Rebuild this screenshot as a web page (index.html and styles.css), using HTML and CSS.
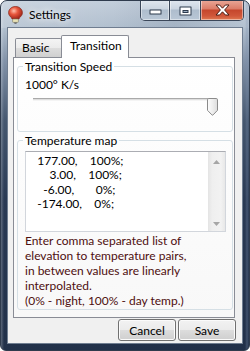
FILE: index.html
```html
<!DOCTYPE html>
<html>
<head>
<meta charset="utf-8">
<title>Settings</title>
<link rel="stylesheet" href="styles.css">
</head>
<body>
<div class="window">
  <div class="titlebar">
    <svg class="app-icon" width="15" height="18" viewBox="0 0 15 18">
      <defs>
        <radialGradient id="bulb" cx="0.38" cy="0.35" r="0.65">
          <stop offset="0" stop-color="#ffc2ad"/>
          <stop offset="0.45" stop-color="#e8573d"/>
          <stop offset="1" stop-color="#a3271a"/>
        </radialGradient>
      </defs>
      <path d="M7.5 0.5C3.6 0.5 0.6 3.3 0.6 6.6c0 2.4 1.4 3.9 2.9 5.1l0.6 1.3h6.8l0.6-1.3c1.5-1.2 2.9-2.7 2.9-5.1C14.4 3.3 11.4 0.5 7.5 0.5z" fill="url(#bulb)" stroke="#8e2c1f" stroke-width="0.8"/>
      <rect x="4.6" y="13" width="5.8" height="3.4" rx="0.8" fill="#e9e2b6" stroke="#7b7560" stroke-width="0.6"/>
      <path d="M6 16.4h3l-0.6 1.3h-1.8z" fill="#5a5a5a"/>
    </svg>
    <span class="title">Settings</span>
    <div class="caption">
      <div class="cap cap-min">
        <svg width="13" height="6" viewBox="0 0 13 6"><rect x="0.5" y="0.5" width="12" height="5" rx="0.5" fill="#2c3a4d"/><rect x="1.5" y="1.5" width="10" height="3" fill="#fff"/></svg>
      </div>
      <div class="cap cap-max">
        <svg width="13" height="10" viewBox="0 0 13 10"><rect x="0.5" y="0.5" width="12" height="9" rx="0.5" fill="#2c3a4d"/><rect x="1.5" y="1.5" width="10" height="7" fill="#fff"/><rect x="3.5" y="4" width="6" height="3" fill="#2c3a4d"/><rect x="4.5" y="5" width="4" height="1" fill="#9fb0c3"/></svg>
      </div>
      <div class="cap cap-close">
        <svg width="15" height="12" viewBox="0 0 15 12"><path d="M1 1h3.6L7.5 4.2 10.4 1H14L9.6 6 14 11h-3.6L7.5 7.8 4.6 11H1l4.4-5z" fill="#fff" stroke="#4b1d14" stroke-width="1" stroke-linejoin="round"/></svg>
      </div>
    </div>
  </div>

  <div class="client">
    <div class="tabs">
      <div class="tab tab-basic">Basic</div>
      <div class="tab tab-active">Transition</div>
    </div>

    <div class="panel">
      <fieldset class="group group-speed">
        <legend>Transition Speed</legend>
        <div class="speed-value">1000° K/s</div>
        <div class="slider">
          <div class="track"></div>
          <svg class="thumb" width="11" height="18" viewBox="0 0 11 18">
            <defs>
              <linearGradient id="thumbfill" x1="0" y1="0" x2="1" y2="0">
                <stop offset="0" stop-color="#fdfdfd"/>
                <stop offset="0.5" stop-color="#eeeeee"/>
                <stop offset="1" stop-color="#dcdcdc"/>
              </linearGradient>
            </defs>
            <path d="M1.8 0.5h7.4a1.3 1.3 0 0 1 1.3 1.3V12.3L6.1 16.9a0.9 0.9 0 0 1-1.2 0L0.5 12.3V1.8a1.3 1.3 0 0 1 1.3-1.3z" fill="url(#thumbfill)" stroke="#8b8b8b" stroke-width="1"/>
          </svg>
        </div>
      </fieldset>

      <fieldset class="group group-map">
        <legend>Temperature map</legend>
        <div class="textbox">
          <pre class="map-text">   177.00,    100%;
       3.00,    100%;
     -6.00,       0%;
   -174.00,    0%;</pre>
          <div class="vscroll">
            <svg width="7" height="4" viewBox="0 0 7 4"><path d="M3.5 0L7 4H0z" fill="#a6a6a6"/></svg>
            <svg width="7" height="4" viewBox="0 0 7 4"><path d="M0 0h7L3.5 4z" fill="#a6a6a6"/></svg>
          </div>
        </div>
        <p class="hint">Enter comma separated list of<br>elevation to temperature pairs,<br>in between values are linearly<br>interpolated.<br>(0% - night, 100% - day temp.)</p>
      </fieldset>
    </div>

    <div class="buttons">
      <button class="btn">Cancel</button>
      <button class="btn">Save</button>
    </div>
  </div>
</div>
</body>
</html>
```

FILE: styles.css
```css
* {
  box-sizing: border-box;
}

html,
body {
  margin: 0;
  padding: 0;
}

body {
  width: 250px;
  height: 351px;
  overflow: hidden;
  background: #ffffff;
  font-family: Lato, "Open Sans", sans-serif;
  font-size: 12px;
  line-height: 15px;
  color: #000000;
}

/* ---------- window frame ---------- */
.window {
  width: 250px;
  height: 351px;
  display: flex;
  flex-direction: column;
  border: 1px solid #2f3b4d;
  border-radius: 7px 7px 6px 6px;
  overflow: hidden;
  background:
    linear-gradient(90deg, rgba(255, 255, 255, 0.25) 0, rgba(255, 255, 255, 0) 3px, rgba(255, 255, 255, 0) 244px, rgba(120, 140, 170, 0.35) 246px, rgba(0, 0, 0, 0) 248px),
    linear-gradient(180deg, #c3cedb 0, #b2c0cf 26px, #8292a8 60px, #45576f 120px, #2a3a54 200px, #213049 100%);
}

.titlebar {
  height: 27px;
  flex: none;
  display: flex;
  align-items: flex-start;
  padding-left: 7px;
  background: linear-gradient(90deg, rgba(255, 255, 255, 0.15) 0, rgba(255, 255, 255, 0) 45%, rgba(60, 80, 110, 0.12) 70%, rgba(255, 255, 255, 0.05) 100%);
}

.app-icon {
  flex: none;
  margin-top: 5px;
}

.title {
  margin-top: 6px;
  margin-left: 6px;
  color: #000000;
  text-shadow: 0 0 6px rgba(255, 255, 255, 0.95), 0 0 10px rgba(255, 255, 255, 0.7);
}

.caption {
  margin-left: auto;
  margin-right: 5px;
  margin-top: -1px;
  display: flex;
  height: 21px;
  border: 1px solid #3b4759;
  border-top: 0;
  border-radius: 0 0 5px 5px;
  overflow: hidden;
}

.cap {
  height: 20px;
  display: flex;
  justify-content: center;
  align-items: center;
  box-shadow: inset 0 0 0 1px rgba(255, 255, 255, 0.45);
}

.cap-min,
.cap-max {
  background: linear-gradient(180deg, #e0e7ef 0, #cbd5e1 45%, #aebdcd 50%, #b9c7d6 100%);
}

.cap-min {
  width: 28px;
  padding-top: 4px;
}

.cap-max {
  width: 31px;
  border-left: 1px solid #3b4759;
  padding-top: 1px;
}

.cap-close {
  width: 43px;
  border-left: 1px solid #3b4759;
  background: linear-gradient(180deg, #eaa999 0, #db7c68 45%, #c5462c 50%, #d0573a 80%, #e07a52 100%);
}

/* ---------- client area ---------- */
.client {
  flex: 1;
  margin: 0 7px 7px;
  padding: 7px 7px 0 5px;
  display: flex;
  flex-direction: column;
  background: #f0f0f0;
  box-shadow: 0 0 0 1px #6f7d90;
}

.tabs {
  flex: none;
  height: 22px;
  display: flex;
  align-items: flex-end;
  padding-left: 2px;
}

.tab {
  border: 1px solid #898c95;
  border-bottom: 0;
  border-radius: 2px 2px 0 0;
}

.tab-basic {
  width: 47px;
  height: 19px;
  padding: 1px 0 0 6px;
  background: linear-gradient(180deg, #f4f4f4 0, #ebebeb 50%, #dddddd 50%, #d0d0d0 100%);
}

.tab-active {
  position: relative;
  z-index: 1;
  width: 68px;
  height: 23px;
  margin-left: -1px;
  margin-bottom: -1px;
  padding: 2px 0 0 8px;
  background: #ffffff;
}

.panel {
  flex: none;
  border: 1px solid #898c95;
  padding: 1px 1px 7px 3px;
  background: linear-gradient(180deg, #ffffff 0, #f8f8f8 100%);
}

/* ---------- group boxes ---------- */
.group {
  margin: 0;
  min-width: 0;
  border: 1px solid #d5dfe5;
  border-radius: 3px;
  padding: 0 7px 15px;
}

.group legend {
  padding: 0 2px;
  margin-left: -2px;
  line-height: 15px;
}

.group-map {
  margin-top: 1px;
  padding-bottom: 1px;
}

.speed-value {
  margin-top: 3px;
}

.slider {
  position: relative;
  height: 18px;
  margin-top: 2px;
  padding-left: 8px;
}

.track {
  width: 180px;
  height: 3px;
  margin-top: 6px;
  border-top: 1px solid #a9a9a9;
  border-bottom: 1px solid #f4f4f4;
  background: #dedede;
}

.thumb {
  position: absolute;
  left: 182px;
  top: 0;
}

/* ---------- text box ---------- */
.textbox {
  display: flex;
  width: 201px;
  height: 81px;
  margin-top: 3px;
  border: 1px solid #d2d6dc;
  border-top-color: #abadb3;
  background: #ffffff;
}

.map-text {
  flex: 1;
  margin: 0;
  padding: 2px 0 0 2px;
  font-family: inherit;
  font-size: 12px;
  line-height: 14.3px;
  white-space: pre;
}

.vscroll {
  flex: none;
  width: 17px;
  display: flex;
  flex-direction: column;
  justify-content: space-between;
  align-items: center;
  padding: 8px 0 5px;
  background: linear-gradient(90deg, #e4e4e4 0, #efefef 25%, #f2f2f2 75%, #e8e8e8 100%);
}

.hint {
  margin: 1px 0 0;
  color: #4e0f0f;
}

/* ---------- dialog buttons ---------- */
.buttons {
  flex: none;
  display: flex;
  justify-content: flex-end;
  gap: 2px;
  margin: 1px -1px 0 0;
}

.btn {
  width: 58px;
  height: 22px;
  padding: 0;
  font-family: inherit;
  font-size: 12px;
  line-height: 15px;
  color: #000000;
  border: 1px solid #707070;
  border-radius: 3px;
  background: linear-gradient(180deg, #f2f2f2 0, #ebebeb 50%, #dddddd 50%, #cfcfcf 100%);
  box-shadow: inset 0 0 0 1px #fbfbfb;
}
```
